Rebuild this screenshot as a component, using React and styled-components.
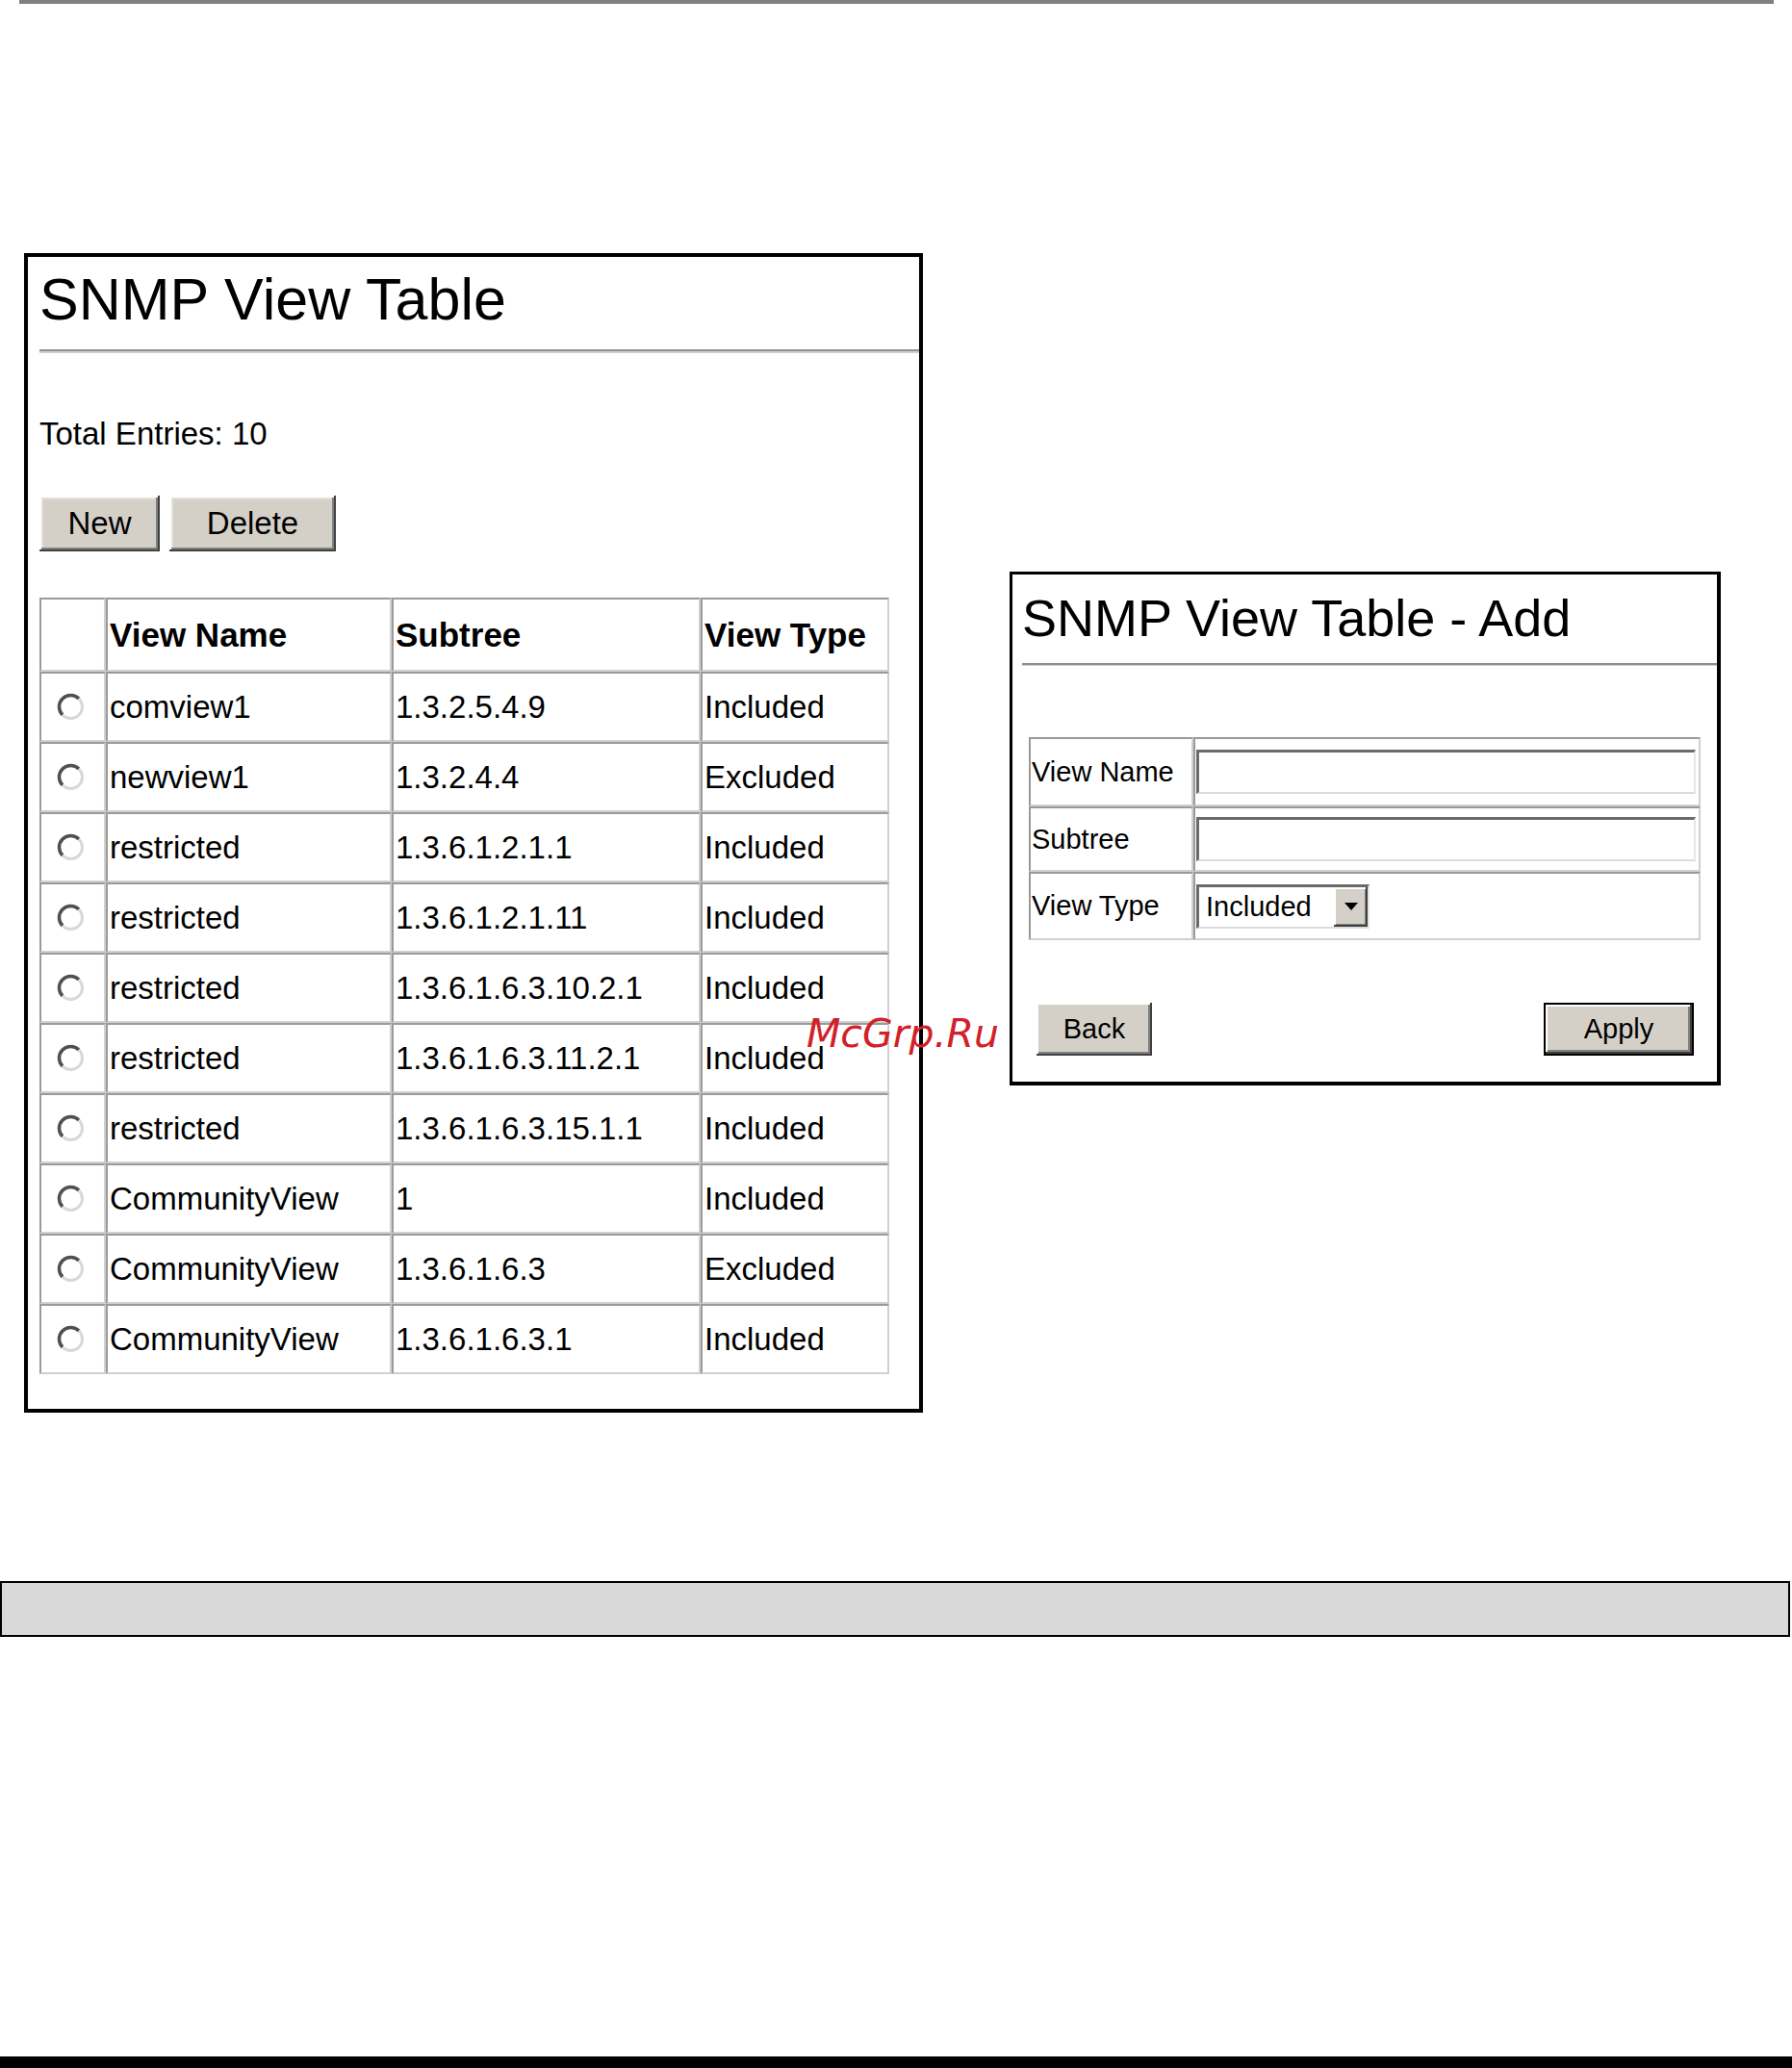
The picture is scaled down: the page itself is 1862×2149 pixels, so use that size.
import React from "react";
import styled, { createGlobalStyle } from "styled-components";

const GlobalStyle = createGlobalStyle`
  body {
    margin: 0;
    background: #ffffff;
    font-family: "Liberation Sans", Arial, sans-serif;
    color: #000;
  }
`;

const rows = [
  { name: "comview1", subtree: "1.3.2.5.4.9", type: "Included" },
  { name: "newview1", subtree: "1.3.2.4.4", type: "Excluded" },
  { name: "restricted", subtree: "1.3.6.1.2.1.1", type: "Included" },
  { name: "restricted", subtree: "1.3.6.1.2.1.11", type: "Included" },
  { name: "restricted", subtree: "1.3.6.1.6.3.10.2.1", type: "Included" },
  { name: "restricted", subtree: "1.3.6.1.6.3.11.2.1", type: "Included" },
  { name: "restricted", subtree: "1.3.6.1.6.3.15.1.1", type: "Included" },
  { name: "CommunityView", subtree: "1", type: "Included" },
  { name: "CommunityView", subtree: "1.3.6.1.6.3", type: "Excluded" },
  { name: "CommunityView", subtree: "1.3.6.1.6.3.1", type: "Included" },
];

function Radio() {
  return (
    <svg width="29" height="29" viewBox="0 0 29 29">
      <circle cx="14.5" cy="14.5" r="12" fill="#fff" />
      <path
        d="M 6 23 A 12 12 0 0 1 23 6"
        stroke="#505050"
        strokeWidth="3.5"
        fill="none"
      />
      <path
        d="M 23 6 A 12 12 0 0 1 6 23"
        stroke="#d8d8d8"
        strokeWidth="3"
        fill="none"
      />
    </svg>
  );
}

function App() {
  return (
    <Page>
      <GlobalStyle />
      <TopRule />
      <Panels>
        <LeftPanel>
          <Title>SNMP View Table</Title>
          <Rule />
          <Entries>Total Entries: 10</Entries>
          <ButtonRow>
            <WinButton $w={125}>New</WinButton>
            <WinButton $w={173}>Delete</WinButton>
          </ButtonRow>
          <ViewTable>
            <colgroup>
              <col style={{ width: 69 }} />
              <col style={{ width: 297 }} />
              <col style={{ width: 321 }} />
              <col style={{ width: 196 }} />
            </colgroup>
            <thead>
              <HeadRow>
                <Cell />
                <HeadCell>View Name</HeadCell>
                <HeadCell>Subtree</HeadCell>
                <HeadCell>View Type</HeadCell>
              </HeadRow>
            </thead>
            <tbody>
              {rows.map((r, i) => (
                <BodyRow key={i}>
                  <RadioCell>
                    <Radio />
                  </RadioCell>
                  <Cell>{r.name}</Cell>
                  <Cell>{r.subtree}</Cell>
                  <Cell>{r.type}</Cell>
                </BodyRow>
              ))}
            </tbody>
          </ViewTable>
        </LeftPanel>

        <RightPanel>
          <AddTitle>SNMP View Table - Add</AddTitle>
          <AddRule />
          <FormTable>
            <colgroup>
              <col style={{ width: 171 }} />
              <col style={{ width: 527 }} />
            </colgroup>
            <tbody>
              <FormRow $h={72}>
                <LabelCell>View Name</LabelCell>
                <FieldCell>
                  <TextBox />
                </FieldCell>
              </FormRow>
              <FormRow $h={68}>
                <LabelCell>Subtree</LabelCell>
                <FieldCell>
                  <TextBox />
                </FieldCell>
              </FormRow>
              <FormRow $h={71}>
                <LabelCell>View Type</LabelCell>
                <FieldCell>
                  <SelectBox>
                    <SelectText>Included</SelectText>
                    <SelectArrow>
                      <svg width="14" height="8" viewBox="0 0 14 8">
                        <polygon points="0,0 14,0 7,8" fill="#000" />
                      </svg>
                    </SelectArrow>
                  </SelectBox>
                </FieldCell>
              </FormRow>
            </tbody>
          </FormTable>
          <FormButtons>
            <SmallButton $w={120}>Back</SmallButton>
            <SmallButton $w={156} $default>
              Apply
            </SmallButton>
          </FormButtons>
        </RightPanel>
      </Panels>

      <GreyBand />
      <FooterBar />
      <Watermark>McGrp.Ru</Watermark>
    </Page>
  );
}

const Page = styled.div`
  position: relative;
  width: 1862px;
  min-height: 2149px;
  display: flex;
  flex-direction: column;
  overflow: hidden;
`;

const TopRule = styled.div`
  height: 4px;
  margin: 0 19px 0 20px;
  background: #808080;
`;

const Panels = styled.div`
  display: flex;
  align-items: flex-start;
  gap: 90px;
  margin-top: 259px;
  padding-left: 25px;
`;

const LeftPanel = styled.div`
  box-sizing: border-box;
  width: 934px;
  border: 4px solid #000;
  padding: 10px 0 36px 12px;
`;

const Title = styled.h1`
  margin: 0;
  font-weight: normal;
  font-size: 61px;
  line-height: 69px;
  white-space: nowrap;
`;

const Rule = styled.div`
  margin-top: 17px;
  border-top: 2px solid #8f8f8f;
  border-bottom: 2px solid #cfcfcf;
`;

const Entries = styled.div`
  margin-top: 65px;
  font-size: 33px;
  line-height: 38px;
`;

const ButtonRow = styled.div`
  display: flex;
  gap: 10px;
  margin-top: 45px;
`;

const WinButton = styled.button`
  width: ${(p) => p.$w}px;
  height: 58px;
  padding: 0;
  border: none;
  background: #d4d0c8;
  font-family: "Liberation Sans", Arial, sans-serif;
  font-size: 33px;
  color: #000;
  box-shadow: inset -2px -2px 0 #404040, inset 2px 2px 0 #ffffff,
    inset -4px -4px 0 #808080, inset 4px 4px 0 #e4e1dc;
`;

const ViewTable = styled.table`
  margin-top: 48px;
  width: 883px;
  table-layout: fixed;
  border-collapse: separate;
  border-spacing: 0;
  font-size: 33px;
`;

const cellBorders = `
  border-style: solid;
  border-width: 2px;
  border-color: #9a9a9a #d0d0d0 #d0d0d0 #9a9a9a;
`;

const HeadRow = styled.tr`
  height: 77px;
`;

const BodyRow = styled.tr`
  height: 73px;
`;

const Cell = styled.td`
  ${cellBorders}
  padding: 0 2px;
  vertical-align: middle;
  white-space: nowrap;
  overflow: hidden;
`;

const HeadCell = styled.th`
  ${cellBorders}
  padding: 0 2px;
  text-align: left;
  vertical-align: middle;
  font-weight: bold;
  font-size: 35px;
  white-space: nowrap;
`;

const RadioCell = styled.td`
  ${cellBorders}
  padding: 0 0 0 16px;
  vertical-align: middle;
  line-height: 0;
`;

const RightPanel = styled.div`
  box-sizing: border-box;
  width: 739px;
  margin-top: 331px;
  border-style: solid;
  border-color: #000;
  border-width: 3px 4px 4px 3px;
  padding: 15px 0 27px 10px;
`;

const AddTitle = styled.h2`
  margin: 0;
  font-weight: normal;
  font-size: 54px;
  line-height: 61px;
  white-space: nowrap;
`;

const AddRule = styled.div`
  margin-top: 16px;
  border-top: 2px solid #8f8f8f;
  border-bottom: 1px solid #cfcfcf;
`;

const FormTable = styled.table`
  margin: 74px 0 0 7px;
  width: 698px;
  table-layout: fixed;
  border-collapse: separate;
  border-spacing: 0;
  font-size: 29px;
`;

const FormRow = styled.tr`
  height: ${(p) => p.$h}px;
`;

const LabelCell = styled.td`
  ${cellBorders}
  padding: 0 1px;
  vertical-align: middle;
  white-space: nowrap;
`;

const FieldCell = styled.td`
  ${cellBorders}
  padding: 0 2px 0 1px;
  vertical-align: middle;
`;

const TextBox = styled.div`
  box-sizing: border-box;
  width: 519px;
  height: 46px;
  background: #fff;
  border-style: solid;
  border-width: 3px 2px 2px 3px;
  border-color: #6a6a6a #e6e6e6 #dcdcdc #6a6a6a;
`;

const SelectBox = styled.div`
  box-sizing: border-box;
  display: flex;
  align-items: stretch;
  width: 180px;
  height: 46px;
  background: #fff;
  border-style: solid;
  border-width: 3px 2px 2px 3px;
  border-color: #6a6a6a #e6e6e6 #dcdcdc #6a6a6a;
`;

const SelectText = styled.div`
  flex: 1;
  display: flex;
  align-items: center;
  padding-left: 7px;
  font-size: 29px;
`;

const SelectArrow = styled.div`
  width: 35px;
  display: flex;
  align-items: center;
  justify-content: center;
  background: #d4d0c8;
  box-shadow: inset -2px -2px 0 #404040, inset 2px 2px 0 #ffffff,
    inset -3px -3px 0 #808080;
`;

const FormButtons = styled.div`
  display: flex;
  justify-content: space-between;
  margin-top: 65px;
  padding: 0 24px 0 15px;
`;

const SmallButton = styled.button`
  box-sizing: border-box;
  width: ${(p) => p.$w}px;
  height: 55px;
  padding: 0;
  border: ${(p) => (p.$default ? "2px solid #000" : "none")};
  background: #d4d0c8;
  font-family: "Liberation Sans", Arial, sans-serif;
  font-size: 29px;
  color: #000;
  box-shadow: inset -2px -2px 0 #404040, inset 2px 2px 0 #ffffff,
    inset -4px -4px 0 #808080;
`;

const GreyBand = styled.div`
  box-sizing: border-box;
  width: 1860px;
  height: 58px;
  margin-top: 175px;
  border: 2px solid #000;
  background: #d9d9d9;
`;

const FooterBar = styled.div`
  margin-top: auto;
  height: 12px;
  background: #000;
`;

const Watermark = styled.div`
  position: absolute;
  left: 838px;
  top: 1054px;
  font-family: "DejaVu Sans", sans-serif;
  font-style: italic;
  font-size: 41px;
  line-height: 41px;
  color: #d2202a;
  white-space: nowrap;
`;

export default App;
